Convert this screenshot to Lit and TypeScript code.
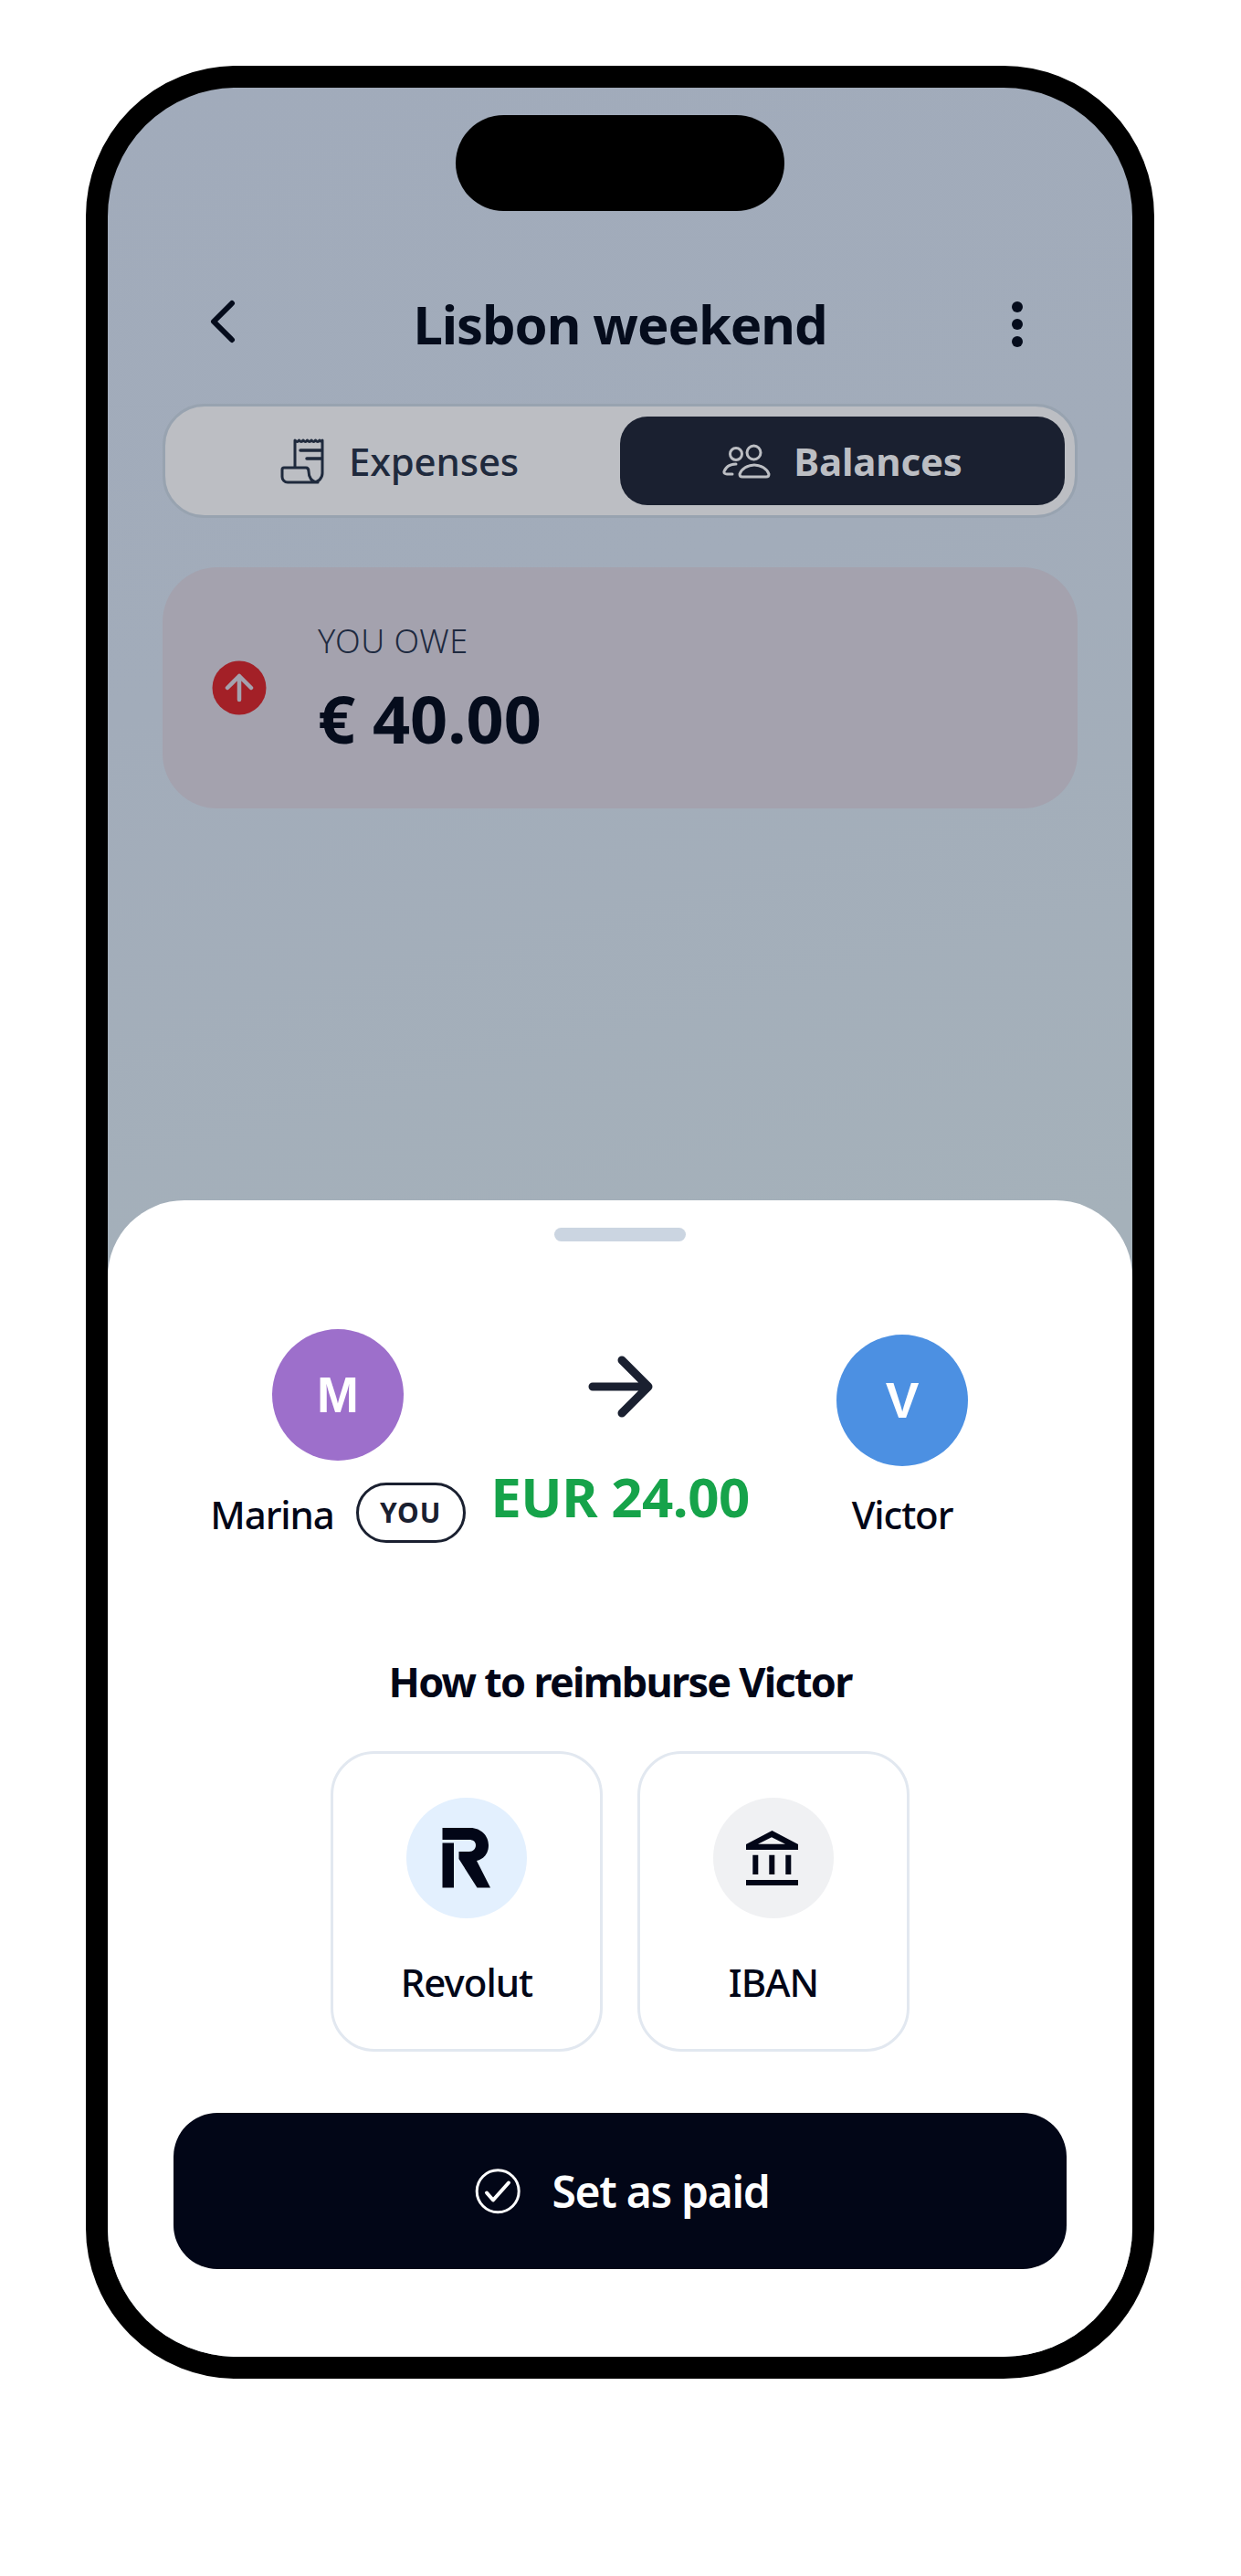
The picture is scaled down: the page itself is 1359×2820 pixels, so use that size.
import { LitElement, html, css } from "lit";
import { customElement } from "lit/decorators.js";

@customElement("app-root")
export class AppRoot extends LitElement {
  static styles = css`
    :host { display: block; height: 2820px; background: #fff; font-family: "Noto Sans", "Open Sans", sans-serif; color: #020617; overflow: hidden; }
    * { box-sizing: border-box; }
    svg { display: block; flex: none; }
    .phone { width: 1170px; height: 2532px; margin: 72px 0 0 94px; border: 24px solid #000; border-radius: 165px; position: relative; overflow: hidden; background: linear-gradient(165deg, #a1abbb 0%, #a2acba 25%, #a5b1ba 55%, #a6b1ba 100%); }
    .notch { position: absolute; top: 30px; left: 381px; width: 360px; height: 105px; border-radius: 53px; background: #000; }
    .screen { padding: 214px 60px 0; display: flex; flex-direction: column; }
    .header { display: grid; grid-template-columns: 1fr auto 1fr; align-items: center; height: 70px; }
    .back { margin: 4px 0 0 50px; }
    .title { font-size: 58px; font-weight: 700; line-height: 70px; color: #050c1c; letter-spacing: -1.1px; white-space: nowrap; margin-top: 10px; }
    .more { justify-self: end; margin: 10px 59px 0 0; }
    .tabs { margin-top: 62px; height: 125px; border: 3px solid #98a3b0; border-radius: 46px; background: #bcbec3; padding: 11px; display: grid; grid-template-columns: 1fr 1fr; }
    .tab { border-radius: 30px; display: flex; align-items: center; justify-content: center; gap: 24px; font-size: 42px; line-height: 56px; font-weight: 500; color: #1f2a3d; letter-spacing: -0.2px; }
    .tab.on { background: #1a2030; color: #bcbec3; font-weight: 700; }
    .tab svg.receipt { margin-left: 3px; margin-right: -2px; }
    .owe { margin-top: 54px; height: 264px; border-radius: 60px; background: #a4a2ae; display: flex; align-items: center; padding: 0 54px; gap: 56px; }
    .owe-label { font-size: 36px; line-height: 48px; font-weight: 300; color: #1e2a40; letter-spacing: 0.5px; }
    .owe-amt { font-size: 72px; line-height: 84px; font-weight: 700; color: #050c1c; margin-top: 18px; }
    .sheet { position: absolute; left: 0; right: 0; bottom: 0; height: 1266px; background: #fff; border-radius: 84px 84px 0 0; padding: 30px 72px 96px; display: flex; flex-direction: column; align-items: stretch; }
    .handle { width: 144px; height: 15px; border-radius: 8px; background: #cbd5e1; align-self: center; flex: none; }
    .flow { margin-top: 96px; height: 233px; display: grid; grid-template-columns: repeat(3, 309px); justify-content: center; align-items: center; }
    .person { display: flex; flex-direction: column; align-items: center; gap: 24px; }
    .avatar { width: 144px; height: 144px; border-radius: 50%; display: flex; align-items: center; justify-content: center; color: #fff; font: 700 55px/1 "Liberation Sans", Arial, sans-serif; }
    .m { background: #9d6fcb; }
    .v { background: #4c90e2; }
    .name { display: flex; align-items: center; gap: 24px; font-size: 42px; line-height: 54px; font-weight: 500; white-space: nowrap; height: 66px; }
    .name.solo { height: 54px; }
    .nm { margin-top: 4px; letter-spacing: -1.1px; }
    .pill { height: 66px; width: 120px; border: 3px solid #1a2030; border-radius: 33px; display: flex; align-items: center; justify-content: center; font-size: 30px; font-weight: 700; letter-spacing: 1px; color: #1a2030; }
    .mid { display: flex; flex-direction: column; align-items: center; }
    .amt { font-size: 60px; line-height: 76px; font-weight: 700; color: #16a34a; white-space: nowrap; letter-spacing: -0.5px; margin-top: 46px; margin-bottom: -14px; }
    .how { margin-top: 123px; font-size: 45px; line-height: 60px; font-weight: 700; text-align: center; letter-spacing: -1.75px; }
    .opts { margin-top: 46px; display: flex; justify-content: center; gap: 38px; }
    .opt { width: 298px; height: 329px; border: 3px solid #e2e8f0; border-radius: 48px; display: flex; flex-direction: column; align-items: center; padding-top: 48px; }
    .ic { width: 132px; height: 132px; border-radius: 50%; display: flex; align-items: center; justify-content: center; }
    .ic.r { background: #e3f0fe; }
    .ic.b { background: #f0f1f3; }
    .ic.b svg { margin-right: 3px; }
    .lbl { margin-top: 43px; font-size: 42px; line-height: 54px; font-weight: 500; letter-spacing: -1px; }
    .pay { margin-top: 67px; height: 171px; border-radius: 48px; background: #020617; color: #fff; display: flex; align-items: center; justify-content: center; gap: 34px; padding-left: 5px; font-size: 48px; font-weight: 600; letter-spacing: -1.3px; }
  `;

  render() {
    return html`
      <div class="phone">
        <div class="screen">
          <div class="header">
            <svg class="back" width="36" height="54" viewBox="0 0 36 54" fill="none" stroke="#050c1c" stroke-width="6" stroke-linecap="round" stroke-linejoin="round"><path d="M26 7 6 27l20 20"/></svg>
            <div class="title">Lisbon weekend</div>
            <svg class="more" width="14" height="52" viewBox="0 0 14 52" fill="#050c1c"><circle cx="7" cy="7" r="6"/><circle cx="7" cy="26" r="6"/><circle cx="7" cy="45" r="6"/></svg>
          </div>
          <div class="tabs">
            <div class="tab">
              <svg class="receipt" width="54" height="54" viewBox="8 8 54 54" fill="none" stroke="#1f2a3d" stroke-width="3" stroke-linecap="round" stroke-linejoin="round"><path d="M25 41V12c2 2 3 2 4.500 0 2 2 3 2 4.500 0 2 2 3 2 4.500 0 2 2 3 2 4.500 0 2 2 3 2 4.500 0 2 2 3 2 4.500 0 2 2 3 2 3 0v36a10 10 0 0 1-10 10H17a6 6 0 0 1-6-6v-8a2 2 0 0 1 2-2h24c2 0 3 1 3 4 0 6 3 12 10 12"/><path d="M31 23h23M38 32h16" stroke-width="3.500"/></svg>
              Expenses
            </div>
            <div class="tab on">
              <svg width="54" height="48" viewBox="12 6 54 48" fill="none" stroke="#bcbec3" stroke-width="3" stroke-linecap="round" stroke-linejoin="round"><circle cx="27" cy="22" r="6.500"/><circle cx="46.500" cy="20.500" r="7.500"/><path d="M31 44c0 2 1 3 3 3h26c2 0 3-1 3-3-2-6-9-10-16-10s-14 4-16 10Z"/><path d="M27 33c-6 0-11 3-13 8-.5 2 1 3 3 3h6"/></svg>
              Balances
            </div>
          </div>
          <div class="owe">
            <svg width="60" height="60" viewBox="0 0 60 60" fill="none" stroke="#a4a2ae" stroke-width="4.500" stroke-linecap="round" stroke-linejoin="round"><circle cx="30" cy="30" r="29.500" fill="#a32027" stroke="none"/><path d="M30 43V17M17 30l13-13 13 13"/></svg>
            <div>
              <div class="owe-label">YOU OWE</div>
              <div class="owe-amt">€ 40.00</div>
            </div>
          </div>
        </div>
        <div class="notch"></div>
        <div class="sheet">
          <div class="handle"></div>
          <div class="flow">
            <div class="person">
              <div class="avatar m">M</div>
              <div class="name"><span class="nm">Marina</span><span class="pill">YOU</span></div>
            </div>
            <div class="mid">
              <svg width="72" height="72" viewBox="0 0 72 72" fill="none" stroke="#1a2030" stroke-width="9" stroke-linecap="round" stroke-linejoin="round"><path d="M6 36h60M38 7l29 29-29 29"/></svg>
              <div class="amt">EUR 24.00</div>
            </div>
            <div class="person">
              <div class="avatar v">V</div>
              <div class="name solo"><span class="nm">Victor</span></div>
            </div>
          </div>
          <div class="how">How to reimburse Victor</div>
          <div class="opts">
            <div class="opt">
              <div class="ic r">
                <svg width="54" height="66" viewBox="14 11 54 66" fill="#020617"><path d="M14.500 11H45c12 0 20 9 20 19 0 9-5 15-13 17l15 29.500H52.500L32.500 45v-8H44c4 0 7-3 7-7s-3-6-7-6H14.500Z"/><path d="M14.500 27.500H27v49H14.500Z"/></svg>
              </div>
              <div class="lbl">Revolut</div>
            </div>
            <div class="opt">
              <div class="ic b">
                <svg width="57" height="60" viewBox="12 11 57 60" fill="#020617"><path fill-rule="evenodd" d="M40.500 11 69 26v6H12v-6ZM40 18.300 25 25.700h30Z"/><path d="M19.300 37.700h6V59h-6ZM37.300 37.700h6V59h-6ZM55.300 37.700h6V59h-6ZM12 65h57v6H12Z"/></svg>
              </div>
              <div class="lbl">IBAN</div>
            </div>
          </div>
          <div class="pay">
            <svg width="50" height="50" viewBox="11 8.500 50 50" fill="none" stroke="#fff" stroke-linecap="round" stroke-linejoin="round"><circle cx="36.200" cy="33.300" r="23" stroke-width="3"/><path d="M24 35l7 8 17-19" stroke-width="4"/></svg>
            Set as paid
          </div>
        </div>
      </div>
    `;
  }
}
